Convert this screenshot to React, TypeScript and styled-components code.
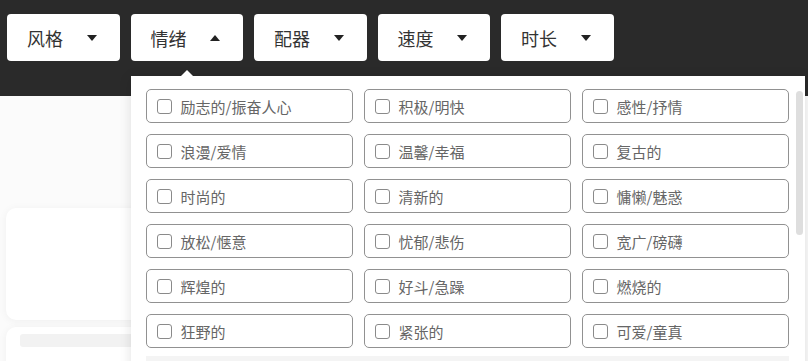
import styled, { createGlobalStyle } from "styled-components";

const filters = [
  { name: "风格", open: false },
  { name: "情绪", open: true },
  { name: "配器", open: false },
  { name: "速度", open: false },
  { name: "时长", open: false },
];

const moods = [
  "励志的/振奋人心",
  "积极/明快",
  "感性/抒情",
  "浪漫/爱情",
  "温馨/幸福",
  "复古的",
  "时尚的",
  "清新的",
  "慵懒/魅惑",
  "放松/惬意",
  "忧郁/悲伤",
  "宽广/磅礴",
  "辉煌的",
  "好斗/急躁",
  "燃烧的",
  "狂野的",
  "紧张的",
  "可爱/童真",
];

const GlobalStyle = createGlobalStyle`
  html, body {
    margin: 0;
    padding: 0;
    background: #fbfbfb;
    font-family: "Noto Sans CJK SC", "Noto Sans", sans-serif;
    overflow: hidden;
  }
`;

export default function App() {
  return (
    <>
      <GlobalStyle />
      <Page>
        <Header>
          {filters.map((f) => (
            <ButtonWrap key={f.name}>
              <FilterButton>
                <Label>{f.name}</Label>
                <Arrow $open={f.open} />
              </FilterButton>
              {f.open && (
                <Dropdown>
                  <Caret />
                  <Grid>
                    {moods.map((m) => (
                      <Option key={m}>
                        <Check />
                        <OptionText>{m}</OptionText>
                      </Option>
                    ))}
                  </Grid>
                  <Footer />
                  <Scrollbar />
                </Dropdown>
              )}
            </ButtonWrap>
          ))}
        </Header>
        <Content>
          <Card $height={112} />
          <Card $height={60}>
            <GrayBar />
          </Card>
        </Content>
      </Page>
    </>
  );
}

const Page = styled.div`
  width: 808px;
  height: 361px;
  overflow: hidden;
`;

const Header = styled.div`
  display: flex;
  gap: 11px;
  height: 96px;
  box-sizing: border-box;
  padding: 14px 7px 0;
  background: #2a2a2a;
  position: relative;
  z-index: 2;
`;

const ButtonWrap = styled.div`
  position: relative;
`;

const FilterButton = styled.div`
  display: flex;
  align-items: center;
  justify-content: space-between;
  width: 112.5px;
  height: 47px;
  box-sizing: border-box;
  padding: 0 23px 0 20px;
  background: #fff;
  border-radius: 4px;
`;

const Label = styled.span`
  font-size: 18px;
  color: #333;
  line-height: 1;
`;

const Arrow = styled.span<{ $open: boolean }>`
  width: 0;
  height: 0;
  border-left: 5px solid transparent;
  border-right: 5px solid transparent;
  ${(p) =>
    p.$open ? "border-bottom: 6px solid #222;" : "border-top: 6px solid #222;"}
`;

const Dropdown = styled.div`
  position: absolute;
  top: 62px;
  left: 0;
  width: 674px;
  height: 320px;
  box-sizing: border-box;
  padding: 13px 0 0 15px;
  background: #fff;
  box-shadow: 0 2px 12px rgba(0, 0, 0, 0.12);
`;

const Caret = styled.span`
  position: absolute;
  top: -6px;
  left: 50px;
  width: 0;
  height: 0;
  border-left: 6px solid transparent;
  border-right: 6px solid transparent;
  border-bottom: 6px solid #fff;
`;

const Grid = styled.div`
  display: grid;
  grid-template-columns: repeat(3, 207px);
  column-gap: 11px;
  row-gap: 11px;
`;

const Option = styled.div`
  display: flex;
  align-items: center;
  height: 34px;
  box-sizing: border-box;
  padding-left: 10px;
  border: 1px solid #919191;
  border-radius: 5px;
  background: #fff;
`;

const Check = styled.span`
  width: 13px;
  height: 13px;
  border: 1px solid #8a8a8a;
  border-radius: 3px;
  margin-right: 9px;
  flex-shrink: 0;
`;

const OptionText = styled.span`
  font-size: 15px;
  color: #666;
  line-height: 1;
`;

const Footer = styled.div`
  margin-top: 8px;
  width: 643px;
  height: 30px;
  background: #f4f4f4;
`;

const Scrollbar = styled.span`
  position: absolute;
  top: 15px;
  right: 2px;
  width: 7px;
  height: 144px;
  border-radius: 4px;
  background: #dedede;
`;

const Content = styled.div`
  display: flex;
  flex-direction: column;
  gap: 7px;
  padding: 112px 0 0 6px;
`;

const Card = styled.div<{ $height: number }>`
  width: 780px;
  height: ${(p) => p.$height}px;
  box-sizing: border-box;
  padding: 7px 14px;
  background: #fff;
  border-radius: 10px;
  box-shadow: 0 1px 8px rgba(0, 0, 0, 0.05);
`;

const GrayBar = styled.div`
  height: 13px;
  border-radius: 3px;
  background: #f2f2f2;
`;
